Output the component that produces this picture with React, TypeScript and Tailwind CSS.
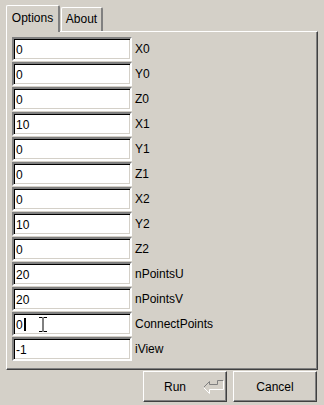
import React from "react";

const rows: [string, string][] = [
  ["0", "X0"],
  ["0", "Y0"],
  ["0", "Z0"],
  ["10", "X1"],
  ["0", "Y1"],
  ["0", "Z1"],
  ["0", "X2"],
  ["10", "Y2"],
  ["0", "Z2"],
  ["20", "nPointsU"],
  ["20", "nPointsV"],
  ["0", "ConnectPoints"],
  ["-1", "iView"],
];

function Entry({ value, caret }: { value: string; caret?: boolean }) {
  return (
    <div className="relative w-[120px] h-[24px] bg-white border-2 border-t-[#808080] border-l-[#808080] border-b-white border-r-white shadow-[inset_1px_1px_0_#000000,inset_-1px_-1px_0_#d4d0c8] flex items-center pl-[2px] pt-[1px]">
      <span className="leading-none">{value}</span>
      {caret && <span className="inline-block w-[2px] h-[13px] bg-black ml-[1px]" />}
      {caret && (
        <svg className="absolute left-[24px] top-[2px]" width="10" height="17" viewBox="0 0 10 17">
          <path d="M1 1.5h3.5M5.5 1.5H9M5 2v13M1 15.5h3.5M5.5 15.5H9" stroke="#000" strokeWidth="1" fill="none" />
        </svg>
      )}
    </div>
  );
}

export default function App() {
  return (
    <div
      className="w-[324px] h-[405px] bg-[#d4d0c8] text-black text-[12px] pt-[5px] px-[6px] flex flex-col"
      style={{ fontFamily: '"Liberation Sans", Arial, sans-serif' }}
    >
      <div className="flex items-end h-[26px]">
        <div className="relative z-10 w-[54px] h-[27px] -mb-[1px] bg-[#d4d0c8] border-l border-t border-white border-r-2 border-r-[#808080] rounded-tl-[2px] rounded-tr-[2px] flex items-center justify-center pb-[2px]">
          Options
        </div>
        <div className="ml-[1px] w-[42px] h-[24px] bg-[#d4d0c8] border-l border-t border-white border-r-2 border-r-[#808080] rounded-tl-[2px] rounded-tr-[2px] flex items-center justify-center pb-[1px]">
          About
        </div>
      </div>
      <div className="w-[312px] h-[339px] border-l border-t border-white border-r border-b border-r-[#404040] border-b-[#404040] shadow-[inset_-1px_-1px_0_#808080] pt-[5px] pl-[5px] flex flex-col gap-[1px]">
        {rows.map(([v, l], i) => (
          <div key={i} className="flex items-center h-[24px]">
            <Entry value={v} caret={i === 11} />
            <span className="ml-[3px]">{l}</span>
          </div>
        ))}
      </div>
      <div className="flex justify-end gap-[6px] mt-[1px] pr-[1px]">
        <button className="relative w-[84px] h-[31px] bg-[#d4d0c8] border border-t-white border-l-white border-r-[#404040] border-b-[#404040] shadow-[inset_-1px_-1px_0_#808080] flex items-center pl-[20px]">
          <span>Run</span>
          <svg className="absolute left-[51px] top-[1px]" width="32" height="28" viewBox="0 0 32 28">
            <path d="M8.5 14.5L14.5 8.5V11.5H22.5V7.5H28.5" stroke="#808080" fill="none" strokeWidth="1" />
            <path d="M28.5 7.5V16.5H14.5V20.5L8.5 14.5" stroke="#ffffff" fill="none" strokeWidth="1" />
          </svg>
        </button>
        <button className="w-[84px] h-[31px] bg-[#d4d0c8] border border-t-white border-l-white border-r-[#404040] border-b-[#404040] shadow-[inset_-1px_-1px_0_#808080] flex items-center justify-center">
          Cancel
        </button>
      </div>
    </div>
  );
}
